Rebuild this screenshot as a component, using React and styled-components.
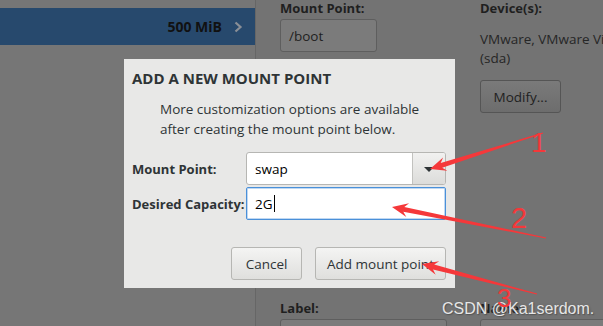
import React from "react";
import styled, { createGlobalStyle } from "styled-components";

const GlobalStyle = createGlobalStyle`
    html, body {
        margin: 0;
        padding: 0;
        overflow: hidden;
        background: #737373;
    }
    * {
        box-sizing: border-box;
    }
`;

const Screen = styled.div`
    position: relative;
    width: 603px;
    height: 326px;
    overflow: hidden;
    display: grid;
    grid-template-columns: 256px 1fr;
    font-family: "Open Sans", "DejaVu Sans", sans-serif;
    font-size: 13.5px;
    color: #222;
`;

const LeftPanel = styled.div`
    background: #767676;
    border-right: 1px solid #666;
    padding-top: 8px;
`;

const SelectedRow = styled.div`
    height: 37px;
    background: #27496d;
    display: flex;
    align-items: center;
    justify-content: flex-end;
    gap: 12px;
    padding-right: 12px;
    font-size: 14px;
    font-weight: bold;
    color: #111;
`;

const Chevron = styled.svg`
    width: 9px;
    height: 12px;
`;

const RightPanel = styled.div`
    background: #737373;
    padding-left: 24px;
    display: flex;
    flex-direction: column;
`;

const FieldGrid = styled.div`
    display: grid;
    grid-template-columns: 200px 1fr;
    margin-top: ${(p) => p.$top || 0}px;
`;

const FieldLabel = styled.div`
    font-weight: bold;
    font-size: 13px;
    line-height: 16px;
    color: #1f1f1f;
    white-space: nowrap;
`;

const DimInput = styled.div`
    margin-top: 3px;
    width: ${(p) => p.$w}px;
    height: 33px;
    background: #7b7b7b;
    border: 1px solid #5e5e5e;
    border-radius: 3px;
    padding-left: 8px;
    display: flex;
    align-items: center;
    color: #1f1f1f;
`;

const DeviceText = styled.div`
    margin-top: 14px;
    line-height: 19px;
    white-space: nowrap;
    color: #262626;
`;

const DimButton = styled.div`
    margin-top: 12px;
    width: 81px;
    height: 33px;
    border: 1px solid #555;
    border-radius: 3px;
    background: linear-gradient(#7a7a7a, #6d6d6d);
    display: flex;
    align-items: center;
    justify-content: center;
    color: #1f1f1f;
`;

const Dialog = styled.div`
    position: absolute;
    left: 124px;
    top: 59px;
    width: 331px;
    height: 229px;
    background: #e8e8e7;
    padding: 10px 9px 9px 8px;
    color: #2e3436;
`;

const Title = styled.div`
    font-weight: bold;
    font-size: 15px;
    line-height: 19px;
`;

const Description = styled.div`
    margin: 11px 0 0 28px;
    line-height: 20px;
`;

const FormGrid = styled.div`
    margin-top: 13px;
    display: grid;
    grid-template-columns: 114px 200px;
    row-gap: 2px;
    align-items: center;
`;

const FormLabel = styled.div`
    font-weight: bold;
    font-size: 13px;
    white-space: nowrap;
`;

const Combo = styled.div`
    height: 33px;
    display: grid;
    grid-template-columns: 1fr 33px;
    border: 1px solid #b6b6b3;
    border-radius: 3px;
    background: #fff;
    overflow: hidden;
`;

const ComboText = styled.div`
    display: flex;
    align-items: center;
    padding-left: 8px;
    color: #000;
`;

const ComboButton = styled.div`
    border-left: 1px solid #c2c2bf;
    background: linear-gradient(#f1f1f0, #dcdcda);
    display: flex;
    align-items: center;
    justify-content: center;
`;

const Triangle = styled.div`
    width: 0;
    height: 0;
    margin-top: 2px;
    border-left: 5px solid transparent;
    border-right: 5px solid transparent;
    border-top: 5px solid #2e3436;
`;

const TextInput = styled.div`
    height: 33px;
    border: 1px solid #4a90d9;
    box-shadow: inset 0 0 0 1px rgba(74, 144, 217, 0.35);
    border-radius: 2px;
    background: #fff;
    display: flex;
    align-items: center;
    padding-left: 8px;
    color: #000;
`;

const Caret = styled.span`
    display: inline-block;
    width: 1px;
    height: 17px;
    margin-left: 1px;
    background: #000;
`;

const ButtonRow = styled.div`
    margin-top: 27px;
    display: flex;
    justify-content: flex-end;
    gap: 13px;
`;

const Button = styled.div`
    width: ${(p) => p.$w}px;
    height: 33px;
    border: 1px solid #b6b6b3;
    border-radius: 3px;
    background: linear-gradient(#f4f4f3, #dfdfdd);
    display: flex;
    align-items: center;
    justify-content: center;
    color: #2e3436;
`;

const Overlay = styled.svg`
    position: absolute;
    left: 0;
    top: 0;
    width: 603px;
    height: 326px;
    pointer-events: none;
`;

const Watermark = styled.div`
    position: absolute;
    left: 442px;
    top: 300px;
    font-family: "Liberation Sans", Arial, sans-serif;
    font-size: 16px;
    color: #e6e6e6;
    text-shadow: 1px 1px 1px #555, 0 0 2px #666;
    white-space: nowrap;
`;

// arrow polygon from tail to tip, tapering shaft with a head
function arrowPoints(tx, ty, px, py) {
    const dx = px - tx;
    const dy = py - ty;
    const len = Math.hypot(dx, dy);
    const ux = dx / len;
    const uy = dy / len;
    const nx = -uy;
    const ny = ux;
    const head = 16;
    const bx = px - ux * head;
    const by = py - uy * head;
    const nbx = px - ux * (head - 4);
    const nby = py - uy * (head - 4);
    const pts = [
        [tx + nx * 0.4, ty + ny * 0.4],
        [nbx + nx * 2.5, nby + ny * 2.5],
        [bx + nx * 7, by + ny * 7],
        [px, py],
        [bx - nx * 7, by - ny * 7],
        [nbx - nx * 2.5, nby - ny * 2.5],
        [tx - nx * 0.4, ty - ny * 0.4],
    ];
    return pts.map((p) => p.map((v) => v.toFixed(1)).join(",")).join(" ");
}

const arrows = [
    { tail: [543, 133], tip: [430, 169], n: "1", x: 531, y: 152, size: 28 },
    { tail: [546, 238], tip: [392, 207], n: "2", x: 511, y: 228, size: 29 },
    { tail: [537, 294], tip: [422, 264], n: "3", x: 497, y: 307, size: 26 },
];

function App() {
    return (
        <>
            <GlobalStyle />
            <Screen>
                <LeftPanel>
                    <SelectedRow>
                        500 MiB
                        <Chevron viewBox="0 0 9 12">
                            <path d="M1.5 1.5 L6.5 6 L1.5 10.5" fill="none" stroke="#8a8f96" strokeWidth="2.2" />
                        </Chevron>
                    </SelectedRow>
                </LeftPanel>
                <RightPanel>
                    <FieldGrid>
                        <div>
                            <FieldLabel>Mount Point:</FieldLabel>
                            <DimInput $w={97}>/boot</DimInput>
                        </div>
                        <div>
                            <FieldLabel>Device(s):</FieldLabel>
                            <DeviceText>
                                VMware, VMware Virtual S
                                <br />
                                (sda)
                            </DeviceText>
                            <DimButton>Modify...</DimButton>
                        </div>
                    </FieldGrid>
                    <FieldGrid $top={187}>
                        <div>
                            <FieldLabel>Label:</FieldLabel>
                            <DimInput $w={167} />
                        </div>
                        <div>
                            <FieldLabel>Name:</FieldLabel>
                            <DimInput $w={140} />
                        </div>
                    </FieldGrid>
                </RightPanel>

                <Dialog>
                    <Title>ADD A NEW MOUNT POINT</Title>
                    <Description>
                        More customization options are available
                        <br />
                        after creating the mount point below.
                    </Description>
                    <FormGrid>
                        <FormLabel>Mount Point:</FormLabel>
                        <Combo>
                            <ComboText>swap</ComboText>
                            <ComboButton>
                                <Triangle />
                            </ComboButton>
                        </Combo>
                        <FormLabel>Desired Capacity:</FormLabel>
                        <TextInput>
                            2G<Caret />
                        </TextInput>
                    </FormGrid>
                    <ButtonRow>
                        <Button $w={71}>Cancel</Button>
                        <Button $w={131}>Add mount point</Button>
                    </ButtonRow>
                </Dialog>

                <Watermark>CSDN @Ka1serdom.</Watermark>

                <Overlay viewBox="0 0 603 326">
                    {arrows.map((a) => (
                        <g key={a.n}>
                            <polygon points={arrowPoints(a.tail[0], a.tail[1], a.tip[0], a.tip[1])} fill="#f5383a" />
                            <text
                                x={a.x}
                                y={a.y}
                                fill="#f5383a"
                                fontSize={a.size}
                                fontFamily="Liberation Sans, sans-serif"
                            >
                                {a.n}
                            </text>
                        </g>
                    ))}
                </Overlay>
            </Screen>
        </>
    );
}

export default App;
